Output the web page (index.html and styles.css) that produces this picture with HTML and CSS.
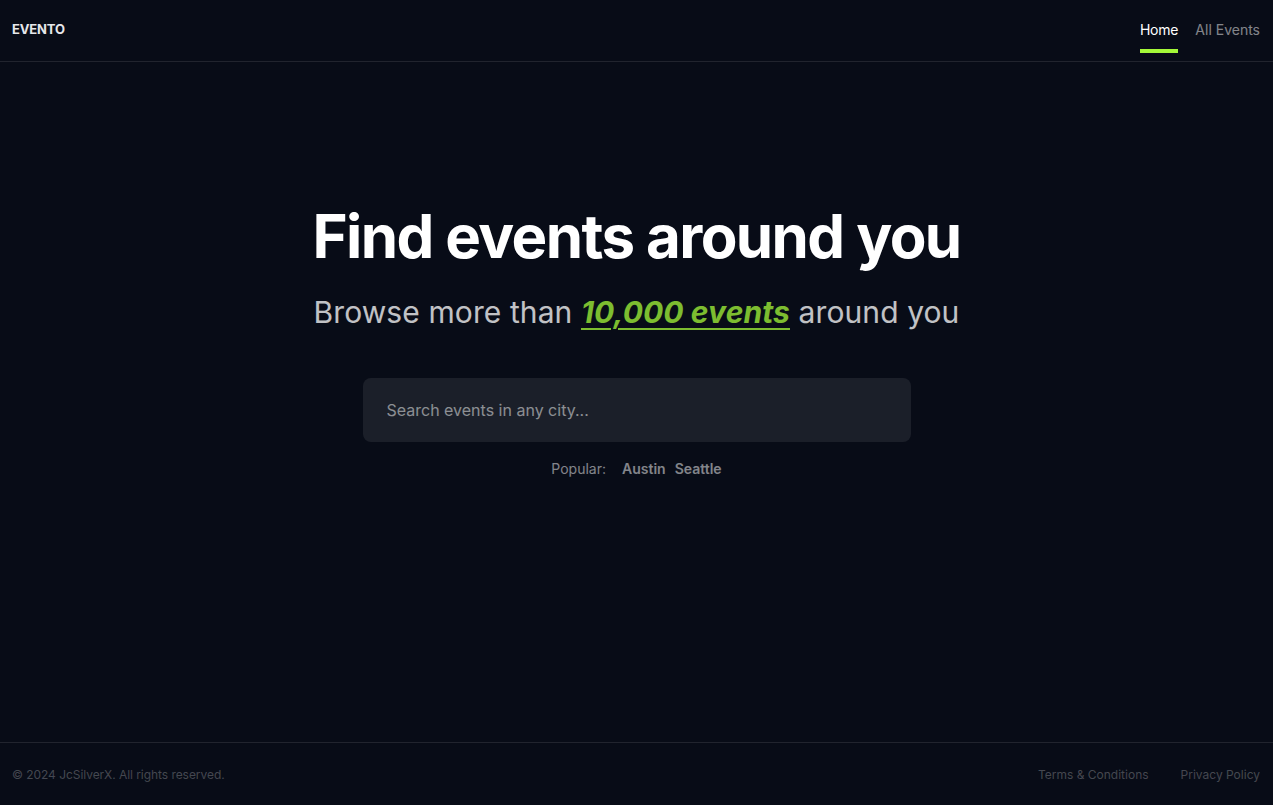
FILE: index.html
```html
<!DOCTYPE html>
<html lang="en">
<head>
<meta charset="utf-8">
<title>Evento</title>
<link rel="stylesheet" href="styles.css">
</head>
<body>
<div class="page">
  <header class="header">
    <a class="logo" href="#">EVENTO</a>
    <nav class="nav">
      <a class="nav-link active" href="#">Home<span class="bar"></span></a>
      <a class="nav-link" href="#">All Events</a>
    </nav>
  </header>
  <main class="main">
    <h1 class="title">Find events around you</h1>
    <p class="subtitle">Browse more than <span class="accent">10,000 events</span> around you</p>
    <form class="search">
      <input class="search-input" type="text" placeholder="Search events in any city...">
    </form>
    <section class="popular">
      <p>Popular:</p>
      <div class="cities">
        <a href="#">Austin</a>
        <a href="#">Seattle</a>
      </div>
    </section>
  </main>
  <footer class="footer">
    <small>© 2024 JcSilverX. All rights reserved.</small>
    <ul class="footer-links">
      <li><a href="#">Terms &amp; Conditions</a></li>
      <li><a href="#">Privacy Policy</a></li>
    </ul>
  </footer>
</div>
</body>
</html>
```
FILE: styles.css
```css
* { box-sizing: border-box; margin: 0; padding: 0; }
html, body { height: 100%; }
body {
  background: #080c17;
  color: #fff;
  font-family: Inter, "Noto Sans", sans-serif;
  -webkit-font-smoothing: antialiased;
}
a { color: inherit; text-decoration: none; }
.page { min-height: 100vh; display: flex; flex-direction: column; }
.header {
  height: 62px;
  display: flex;
  align-items: center;
  justify-content: space-between;
  padding: 0 13px 0 12px;
  border-bottom: 1px solid rgba(255,255,255,0.1);
  flex-shrink: 0;
}
.logo { font-size: 13px; font-weight: 700; letter-spacing: -0.15px; color: #e6e7ea; margin-top: -3px; }
.nav { display: flex; gap: 17px; margin-top: -2px; }
.nav-link { position: relative; font-size: 14px; line-height: 20px; color: rgba(255,255,255,0.5); }
.nav-link.active { color: #fff; letter-spacing: -0.2px; }
.bar {
  position: absolute; left: 0; right: 0; bottom: -13px; height: 4px;
  background: #a4f839;
}
.main {
  flex: 1;
  display: flex;
  flex-direction: column;
  align-items: center;
  padding-top: 144px;
}
.title {
  font-size: 60px;
  line-height: 60px;
  font-weight: 700;
  letter-spacing: -1.6px;
}
.subtitle {
  margin-top: 28px;
  font-size: 30px;
  line-height: 36px;
  opacity: 0.75;
  letter-spacing: 0.1px;
}
.accent {
  color: #a4f839;
  font-style: italic;
  font-weight: 700;
  text-decoration: underline;
  text-underline-offset: 5px;
  text-decoration-thickness: 2px;
  letter-spacing: 0.1px;
}
.search { margin-top: 48px; width: 548px; }
.search-input {
  width: 100%;
  height: 64px;
  border: none;
  outline: none;
  border-radius: 8px;
  background: rgba(255,255,255,0.08);
  color: #fff;
  padding: 0 24px;
  font: inherit;
  font-size: 16px;
}
.search-input::placeholder { color: rgba(255,255,255,0.5); }
.popular {
  margin-top: 17px;
  display: flex;
  gap: 16px;
  font-size: 14px;
  line-height: 20px;
  color: rgba(255,255,255,0.5);
}
.cities { display: flex; gap: 9px; font-weight: 600; }
.footer {
  height: 63px;
  flex-shrink: 0;
  border-top: 1px solid rgba(255,255,255,0.1);
  display: flex;
  align-items: center;
  justify-content: space-between;
  padding: 1px 13px 0 12px;
  font-size: 12px;
  color: rgba(255,255,255,0.25);
}
.footer small { font-size: 12px; letter-spacing: -0.05px; }
.footer-links { list-style: none; display: flex; gap: 32px; }
```
